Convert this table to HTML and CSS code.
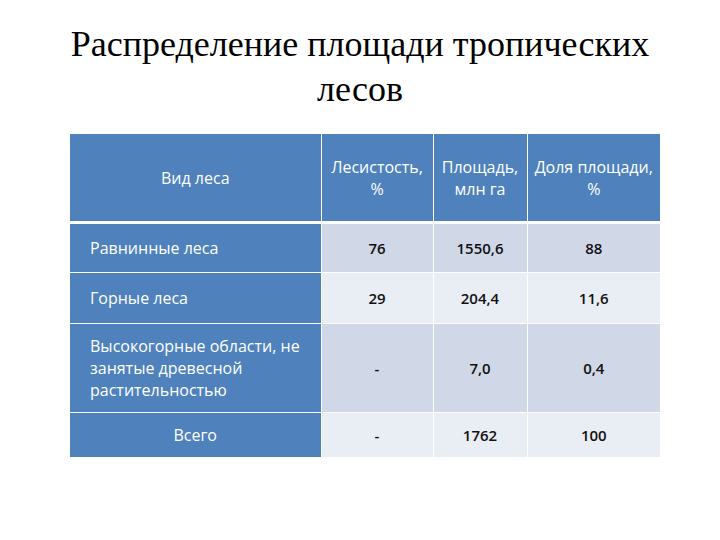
FILE: index.html
```html
<!DOCTYPE html>
<html lang="ru">
<head>
<meta charset="utf-8">
<title>Распределение площади тропических лесов</title>
<link rel="stylesheet" href="styles.css">
</head>
<body>
<div class="slide">
  <h1 class="title">Распределение площади тропических<br>лесов</h1>
  <table class="data">
    <colgroup>
      <col class="c1"><col class="c2"><col class="c3"><col class="c4">
    </colgroup>
    <thead>
      <tr class="head">
        <th class="center">Вид леса</th>
        <th>Лесистость, %</th>
        <th>Площадь, млн га</th>
        <th>Доля площади, %</th>
      </tr>
    </thead>
    <tbody>
      <tr class="odd r1">
        <th class="name">Равнинные леса</th>
        <td>76</td><td>1550,6</td><td>88</td>
      </tr>
      <tr class="even r2">
        <th class="name">Горные леса</th>
        <td>29</td><td>204,4</td><td>11,6</td>
      </tr>
      <tr class="odd r3">
        <th class="name">Высокогорные области, не занятые древесной растительностью</th>
        <td>-</td><td>7,0</td><td>0,4</td>
      </tr>
      <tr class="even r4">
        <th class="center">Всего</th>
        <td>-</td><td>1762</td><td>100</td>
      </tr>
    </tbody>
  </table>
</div>
</body>
</html>
```

FILE: styles.css
```css
html, body {
  margin: 0;
  padding: 0;
  background: #ffffff;
}

.slide {
  width: 720px;
  height: 540px;
  box-sizing: border-box;
  padding-top: 22px;
}

.title {
  margin: 0 auto;
  width: 680px;
  font-family: "Liberation Serif", "Times New Roman", serif;
  font-weight: normal;
  font-size: 36px;
  line-height: 45px;
  text-align: center;
  color: #000000;
}

.data {
  margin: 22px 0 0 70px;
  width: 590px;
  border-collapse: collapse;
  table-layout: fixed;
  font-family: "Open Sans", "DejaVu Sans", sans-serif;
  font-size: 16px;
  line-height: 22px;
}

.c1 { width: 251px; }
.c2 { width: 112px; }
.c3 { width: 94px; }
.c4 { width: 133px; }

.data th,
.data td {
  border: 1px solid #ffffff;
  padding: 0 2px;
  text-align: center;
  vertical-align: middle;
}

.head th {
  background: #4f81bd;
  color: #ffffff;
  font-weight: normal;
  height: 87px;
  border-bottom: 3px solid #ffffff;
  border-top: none;
}

.data tbody th {
  background: #4f81bd;
  color: #ffffff;
  font-weight: normal;
}

.data tbody th.name {
  text-align: left;
  padding-left: 20px;
}

.data td {
  color: #111111;
  font-size: 15px;
  font-weight: 600;
}

.odd td { background: #d0d8e8; }
.even td { background: #e9edf4; }

.r1 th, .r1 td { height: 48px; }
.r2 th, .r2 td { height: 50px; }
.r3 th, .r3 td { height: 88px; }
.r4 th, .r4 td { height: 44px; border-bottom: none; }

.data tr > :first-child { border-left: none; }
.data tr > :last-child { border-right: none; }
```
